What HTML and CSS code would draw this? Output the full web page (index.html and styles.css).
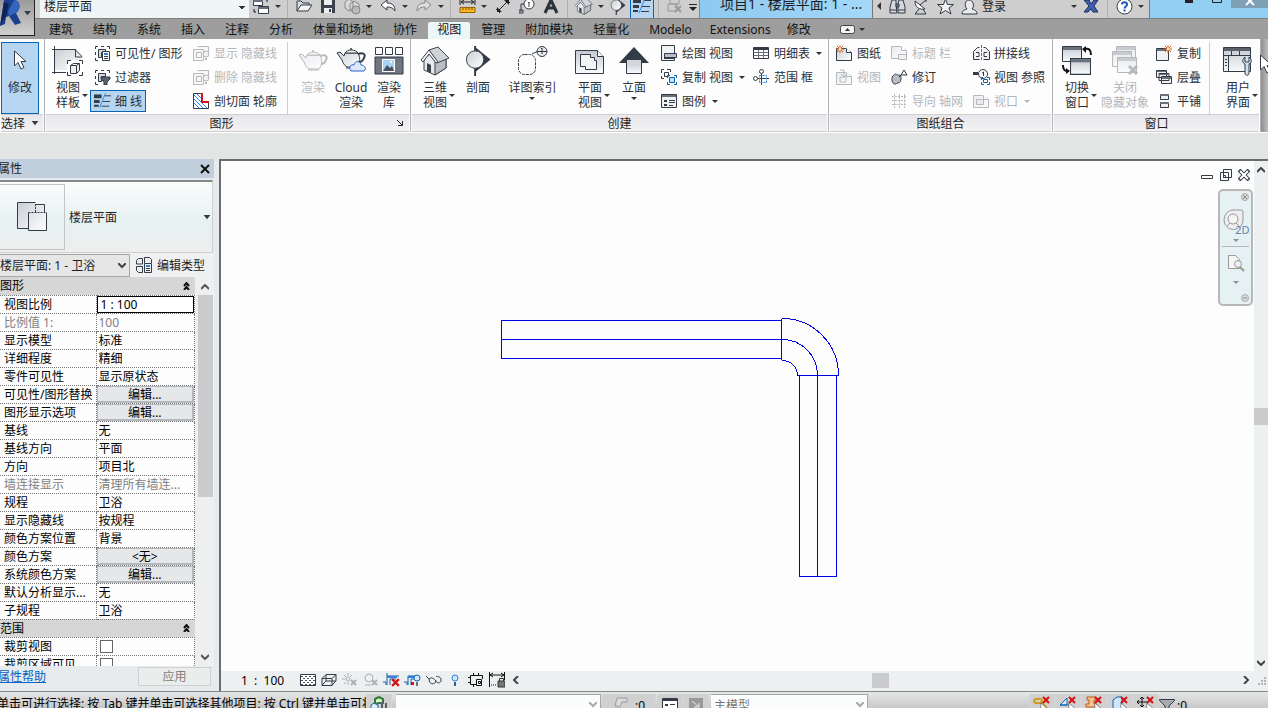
FILE: index.html
```html
<!DOCTYPE html>
<html lang="zh-CN">
<head>
<meta charset="utf-8">
<title>项目1 - 楼层平面: 1 - 卫浴</title>
<link rel="stylesheet" href="styles.css">
</head>
<body>
<svg class="defs" aria-hidden="true">
  <defs>
    <linearGradient id="gr" x1="0" y1="0" x2="1" y2="1"><stop offset="0" stop-color="#c9cdd3"/><stop offset="1" stop-color="#fff"/></linearGradient>
    <linearGradient id="gv" x1="0" y1="0" x2="0" y2="1"><stop offset="0" stop-color="#c3c8d0"/><stop offset="1" stop-color="#fafbfc"/></linearGradient>
  </defs>
  <symbol id="thin" viewBox="0 0 18 16"><path d="M0 1h8v4H0zM0 7h6v3H0zM0 12h5v2H0z" fill="#333b47"/><path d="M11 2.500h7M9 8.500h8M8 13.500h8" stroke="#333b47"/><path d="M12 0 6 15" stroke="#2f8be6"/></symbol>
  <symbol id="house" viewBox="0 0 30 30"><path d="M4 13v11l11 5 11-7V11L15 3z" fill="#e7e9ec" stroke="#3b424c"/><path d="M15 16v13l11-7V10z" fill="#b9bec6" stroke="#3b424c"/><path d="M9 4l9-3 11 11-12 5z" fill="#cfd3d8" stroke="#3b424c"/><path d="M9 4 1 14l2 2 6-8 7 9 2-1z" fill="#f3f4f5" stroke="#3b424c"/><path d="M7 17l4 2v8l-4-2z" fill="#3b424c"/></symbol>
  <symbol id="sect" viewBox="0 0 26 31"><path d="M10 1l16 13-16 13z" fill="#333b47"/><path d="M10 0v31" stroke="#333b47" stroke-width="2"/><circle cx="10" cy="14" r="9" fill="url(#gr)" stroke="#333b47"/></symbol>
  <symbol id="teapot" viewBox="0 0 30 24"><path d="M9 7h13c2 4 3 9-1 14H11C8 19 7 17 6 14L1 7l3-1 4 4z" fill="url(#gr)" stroke="#333b47"/><path d="M22 8c5-2 8 0 6 4-1 3-3 4-5 4" fill="none" stroke="#333b47" stroke-width="2"/><path d="M9 7c2-4 11-4 13 0z" fill="#eef0f2" stroke="#333b47"/><path d="M10 22h11" stroke="#333b47"/><circle cx="15" cy="3" r="1" fill="#333b47"/></symbol>
  <symbol id="frame" viewBox="0 0 16 16"><path d="M1.500 4V1.500H4M7 1.500h3M13 1.500h2.500V4M1.500 7v3M1.500 13v2.500H4" fill="none" stroke="#333b47"/><path d="M4.500 4.500h7v3h-4v5h-3z" fill="#d5d9de" stroke="#333b47"/></symbol>
  <symbol id="sheet" viewBox="0 0 16 16"><path d="M.5 3.500h9l6 4v8H.5z" fill="url(#gr)" stroke="#333b47"/><path d="M10.500 3.500v4h5" fill="#fff" stroke="#333b47"/></symbol>
  <symbol id="win" viewBox="0 0 20 16"><path d="M.5.5h19v15H.5z" fill="url(#gv)" stroke="#333b47"/><path d="M1 1h18v3H1z" fill="#69717d"/></symbol>
  <symbol id="spark" viewBox="0 0 8 8"><path d="M4 0v8M0 4h8M1 1l6 6M7 1 1 7" stroke="#d8541b"/><circle cx="4" cy="4" r="1.500" fill="#ffe6a0"/></symbol>
  <symbol id="redx" viewBox="0 0 8 8"><path d="M1 1l6 6M7 1 1 7" stroke="#d31212" stroke-width="2"/></symbol>
  <symbol id="arrow" viewBox="0 0 14 20"><path d="M1.500 1v15l3.500-3.500 3 6.500 3-1.500-3-6h5z" fill="#fff" stroke="#333b47"/></symbol>
  <symbol id="dwarr" viewBox="0 0 8 6"><path d="M0 0h8L4 5z" fill="#333b47"/></symbol>
</svg>

<header class="top">
  <button class="app" aria-label="应用程序菜单"><svg width="24" height="28" viewBox="0 0 24 28"><path d="M0 26 4 0h10c7 0 7 10 2 13l5 10-6 2-6-9-3 1-1 7z" fill="#1d3f8f"/><path d="M0 26 4 2l5 2-3 12z" fill="#0f2559"/><path d="M14 0c7 0 7 10 2 13L9 16l-1-4z" fill="#3564bd"/></svg><svg class="caret" width="7" height="5"><use href="#dwarr"/></svg></button>
  <div class="bar">
    <div class="bar-in">
      <div class="qat">
        <select class="doc" aria-label="当前视图"><option>楼层平面</option></select>
        <button class="slot" aria-label="切换窗口"><svg width="18" height="18" viewBox="0 0 18 18"><path d="M1.500 2.500h9v6h-9zM6.500 9.500h10v7h-10z" fill="#fff" stroke="#333b47"/><path d="M6 10h10v2H6zM1 3h10v2H1z" fill="#69717d"/><path d="M12 2h3v3M2 12v3h2" fill="none" stroke="#111"/></svg></button><button class="dd" aria-label="更多"></button><i class="sep"></i>
        <button class="slot" aria-label="打开"><svg width="17" height="16" viewBox="0 0 17 16"><path d="M1 13V3h4l2 2h6v3" fill="#d9dce0" stroke="#333b47"/><path d="M1 13 5 7h11l-4 6z" fill="#f4f5f6" stroke="#333b47"/></svg></button>
        <button class="slot" aria-label="保存"><svg width="16" height="16" viewBox="0 0 16 16"><path d="M1 1h14v14H1z" fill="#39414d"/><path d="M4 1h8v6H4zM4 10h8v5H4z" fill="#eceef0"/><path d="M9 11h2v3H9z" fill="#39414d"/></svg></button>
        <button class="slot" aria-label="同步"><svg width="18" height="18" viewBox="0 0 18 18"><path d="M2 5l4-3 4 3v6l-4 3-4-3zM7 7l4-3 5 3v6l-5 3-4-3z" fill="#d7d7d7" stroke="#888"/><circle cx="13" cy="13" r="4" fill="#bbb" stroke="#888"/></svg></button><button class="dd gap" aria-label="更多"></button>
        <button class="slot" aria-label="放弃"><svg width="16" height="16" viewBox="0 0 16 16"><path d="M1 7 7 2v3c6 0 8 3 8 8-2-3-4-4-8-4v3z" fill="#fff" stroke="#333b47"/></svg></button><button class="dd gap" aria-label="更多"></button>
        <button class="slot" aria-label="重做"><svg width="16" height="16" viewBox="0 0 16 16"><path d="M15 7 9 2v3C3 5 1 8 1 13c2-3 4-4 8-4v3z" fill="#ddd" stroke="#8a8a8a"/></svg></button><button class="dd" aria-label="更多"></button><i class="sep"></i>
        <button class="slot" aria-label="测量"><svg width="17" height="16" viewBox="0 0 17 16"><path d="M1 1v6M16 1v6M2 4h13M5 2 2 4l3 2M12 2l3 2-3 2" fill="none" stroke="#222"/><path d="M1 9.500h15v5H1z" fill="#f7b71d" stroke="#9a6400"/><path d="M4 10v2M7 10v2M10 10v2M13 10v2" stroke="#7a4c00"/></svg></button><button class="dd gap" aria-label="更多"></button>
        <button class="slot" aria-label="对齐尺寸标注"><svg width="16" height="16" viewBox="0 0 16 16"><path d="M3 13 13 3M1 11l4 4M11 1l4 4" stroke="#222"/><path d="M2 14v-5l5 5zM14 2v5L9 2z" fill="#222"/></svg></button>
        <button class="slot" aria-label="按类别标记"><svg width="17" height="16" viewBox="0 0 17 16"><circle cx="10" cy="6" r="5" fill="#fff" stroke="#333b47"/><path d="M9 5l1-1v5M5 6H2v8M0 12h4v3H0z" fill="none" stroke="#333b47"/></svg></button>
        <button class="slot" aria-label="文字"><svg width="16" height="16" viewBox="0 0 16 16"><path d="M2 15 8 2l6 13M5 10h6" fill="none" stroke="#2c323b" stroke-width="3"/></svg></button><i class="sep"></i>
        <button class="slot" aria-label="默认三维视图"><svg width="18" height="18"><use href="#house"/></svg></button><button class="dd" aria-label="更多"></button>
        <button class="slot" aria-label="剖面"><svg width="16" height="18"><use href="#sect"/></svg></button>
        <button class="slot pressed" aria-label="细线"><svg width="18" height="16"><use href="#thin"/></svg></button><i class="sep"></i>
        <button class="slot off" aria-label="关闭隐藏对象"><svg width="16" height="16" viewBox="0 0 16 16"><path d="M3 1h9v5H3zM1 6h9v7H1z" fill="none" stroke="#333b47"/><path d="M8 8l6 6M14 8l-6 6" stroke="#333b47" stroke-width="2"/></svg></button>
        <button class="slot narrow" aria-label="自定义快速访问工具栏"><svg width="8" height="12" viewBox="0 0 8 12"><path d="M0 4.500h8" stroke="#222"/><path d="M0 7h8l-4 4z" fill="#222"/></svg></button>
      </div>
      <div class="caption">项目1 - 楼层平面: 1 - ...</div>
      <div class="info">
        <button class="slot narrow" aria-label="折叠"><svg width="4" height="8"><path d="M4 0v8L0 4z" fill="#333"/></svg></button>
        <button class="slot" aria-label="搜索"><svg width="17" height="17" viewBox="0 0 17 17"><path d="M3 2h4v4l1 9H1V9zM10 2h4l2 7v6H9V6zM7 6h3v3H7z" fill="#d5d8dc" stroke="#333b47"/><path d="M1 12h7M9 12h7" stroke="#333b47"/></svg></button>
        <button class="slot" aria-label="通讯中心"><svg width="17" height="17" viewBox="0 0 17 17"><path d="M2 3c0 6 4 9 10 8z" fill="#fff" stroke="#333b47"/><path d="M7 7l6-5M13 1v3M6 11l-4 5h11l-3-5" fill="none" stroke="#333b47"/></svg></button>
        <button class="slot" aria-label="收藏夹"><svg width="17" height="17" viewBox="0 0 17 17"><path d="M8.500 1l2 5.500h6L12 10l2 6-5.500-3.500L3 16l2-6L.5 6.500h6z" fill="#f1f2f3" stroke="#333b47"/></svg></button>
        <button class="login"><svg width="17" height="17" viewBox="0 0 17 17"><path d="M1 16c0-4 3-4 5-5-3-3-2-9 2-9s6 6 3 9c2 1 5 1 5 5z" fill="#e9ebed" stroke="#333b47"/></svg>登录</button>
        <span class="grow"></span>
        <button class="dd" aria-label="更多"></button>
        <button class="slot" aria-label="Exchange Apps"><svg width="16" height="16" viewBox="0 0 16 16"><path d="M1 2h5l2 4 3-4h4l-4 6 4 6h-5l-2-3-3 3H1l5-6z" fill="#3f5fae" stroke="#1d2d5c"/></svg></button><i class="sep"></i>
        <button class="slot" aria-label="帮助"><svg width="17" height="17" viewBox="0 0 17 17"><circle cx="8.500" cy="8.500" r="7.500" fill="#fff" stroke="#333b47"/><path d="M6 6.500c0-3 5-3 5 0 0 2-2.500 2-2.500 4M8.500 11.500v2" fill="none" stroke="#2354b8" stroke-width="2"/></svg></button><button class="dd" aria-label="更多"></button>
      </div>
      <div class="winbtns">
        <button aria-label="最小化"><svg width="10" height="16"><path d="M1 6h8v3H1z" fill="#222"/></svg></button>
        <button aria-label="最大化"><svg width="10" height="16"><path d="M.5.5h9v8h-9z" fill="none" stroke="#222"/></svg></button>
        <button class="close" aria-label="关闭"><svg width="10" height="16"><path d="M1 0l8 8M9 0 1 8" stroke="#fff" stroke-width="2"/></svg></button>
      </div>
    </div>
  </div>
  <nav class="tabs">
    <button>建筑</button><button>结构</button><button>系统</button><button>插入</button><button>注释</button><button>分析</button><button>体量和场地</button><button>协作</button><button class="on">视图</button><button>管理</button><button>附加模块</button><button>轻量化</button><button>Modelo</button><button class="ext">Extensions</button><button class="ext">修改</button>
    <button class="mini" aria-label="最小化功能区"><svg width="15" height="9" viewBox="0 0 15 9"><rect x=".5" y=".5" width="14" height="8" rx="2" fill="#f4f4f4" stroke="#444"/><path d="M5 6l2.500-3L10 6z" fill="#333"/></svg></button><button class="dd" aria-label="更多"></button>
  </nav>
</header>

<section class="ribbon" aria-label="视图">
  <div class="panel">
    <div class="tools t-select">
      <button class="big pressed"><svg width="14" height="30" viewBox="0 0 14 30"><use href="#arrow" y="4" width="14" height="20"/></svg><span>修改</span></button>
    </div>
    <div class="ptitle left">选择 <svg width="8" height="5"><use href="#dwarr"/></svg></div>
  </div>

  <div class="panel">
    <div class="tools t-graph">
      <button class="big"><svg width="32" height="30" viewBox="0 0 32 30"><path d="M2 3h21l7 7v14H2z" fill="url(#gr)"/><path d="M2.500 0v28M0 3.500h23l7 7M0 26.500h14M23.500 3v8H30" fill="none" stroke="#333b47"/><path d="M15 14h15v15H15z" fill="#fff"/><path d="M15.500 18v-3.500H19M27 14.500h3.500V18M15.500 26v3.500H19M27 29.500h3.500V26" fill="none" stroke="#333b47"/><path d="M18.500 19.500l3-2h6v7l-3 3h-6zM18.500 19.500h6v8M24.500 19.500l3-2" fill="#eee" stroke="#333b47"/></svg><span class="split">视图<br>样板</span></button>
      <div class="stack">
        <button class="sm"><svg width="17" height="16" viewBox="0 0 17 16"><use href="#frame" width="16" height="16"/><path d="M8.500 6.500h7v9h-7z" fill="#fff" stroke="#333b47"/><path d="M10 8h4v2h-4z" fill="#2f7fdc"/><path d="M10 11.500h4M10 13.500h4" stroke="#333b47"/></svg>可见性/ 图形</button>
        <button class="sm"><svg width="17" height="16" viewBox="0 0 17 16"><use href="#frame" width="16" height="16"/><path d="M7 8h9v2l-3 3v3h-3v-3L7 10z" fill="#59616d" stroke="#333b47"/></svg>过滤器</button>
        <button class="sm pressed"><svg width="17" height="16"><use href="#thin"/></svg>细 线</button>
      </div>
      <div class="stack ruled">
        <button class="sm off" disabled><svg width="17" height="16" viewBox="0 0 17 16"><path d="M4.500 1.500h11v8M.5 4.500h10v11H.5zM3.500 7.500h5v5h-5z" fill="#eee" stroke="#333b47"/><circle cx="13" cy="9" r="3" fill="#ddd" stroke="#333b47"/><path d="M12 13h2v2h-2z" fill="#333b47"/></svg>显示 隐藏线</button>
        <button class="sm off" disabled><svg width="17" height="16" viewBox="0 0 17 16"><path d="M4.500 1.500h11v8M.5 4.500h10v11H.5zM3.500 7.500h5v5h-5z" fill="#eee" stroke="#333b47"/><circle cx="13" cy="9" r="3" fill="#ddd" stroke="#333b47"/><path d="M12 13h2v2h-2z" fill="#333b47"/></svg>删除 隐藏线</button>
        <button class="sm"><svg width="17" height="16" viewBox="0 0 17 16"><path d="M.5.5h15v15H.5z" fill="#fff" stroke="#333b47"/><path d="M1 2l13 13M1 6l9 9M1 10l5 5M4 1l6 6" stroke="#2f7fdc"/><path d="M9 0h7v9H9z" fill="#fff"/><path d="M9 0v9h7" fill="none" stroke="#d31212" stroke-width="2"/></svg>剖切面 轮廓</button>
      </div>
      <button class="big off" disabled><svg width="30" height="30" viewBox="0 0 30 30"><use href="#teapot" y="2" width="30" height="24"/></svg><span>渲染</span></button>
      <button class="big"><svg width="32" height="30" viewBox="0 0 32 30"><use href="#teapot" x="1" width="30" height="24"/><path d="M16 25c-3-4 0-7 3-6 1-5 7-4 7 0 4 0 6 4 3 6z" fill="#dbe9fb" stroke="#2a62c9"/></svg><span>Cloud<br>渲染</span></button>
      <button class="big"><svg width="30" height="30" viewBox="0 0 30 30"><path d="M1.500 1.500h7v7h-7zM11.500 1.500h7v7h-7zM21.500 1.500h7v7h-7z" fill="#fff" stroke="#333b47"/><path d="M1 11h28v17H1z" fill="#6e7682" stroke="#333b47"/><path d="M8.500 13.500h12v12h-12z" fill="#a9d2f5" stroke="#fff"/><path d="M9 25l4-6 3 3 2-2 2 5z" fill="#47515e"/><circle cx="17" cy="16" r="1" fill="#fff"/></svg><span>渲染<br>库</span></button>
    </div>
    <div class="ptitle with-launch"><span>图形</span><button class="launch" aria-label="图形显示选项"><svg width="6" height="6"><path d="M0 0l5 5M5.500 1v4.500H1" fill="none" stroke="#222"/></svg></button></div>
  </div>

  <div class="panel">
    <div class="tools t-create">
      <button class="big"><svg width="30" height="30"><use href="#house"/></svg><span class="split">三维<br>视图</span></button>
      <button class="big"><svg width="26" height="30"><use href="#sect"/></svg><span>剖面</span></button>
      <button class="big"><svg width="40" height="30" viewBox="0 0 40 30"><rect x="5.500" y="8.500" width="17" height="20" rx="6" fill="none" stroke="#333b47" stroke-dasharray="3 1"/><path d="M19 8l4-2h5" fill="none" stroke="#333b47"/><circle cx="29" cy="5.500" r="5" fill="#e6e8ea" stroke="#333b47"/><path d="M24 5.500h10M28 3l1-1v6" fill="none" stroke="#333b47"/></svg><span class="drop">详图索引</span></button>
      <button class="big"><svg width="32" height="30" viewBox="0 0 32 30"><path d="M1.500 4.500h22l6 6v17h-28z" fill="url(#gv)" stroke="#333b47"/><path d="M23.500 4.500v6h6" fill="#fff" stroke="#333b47"/><path d="M6.500 8.500h10v3h4v3h2v9h-11v-3h-5z" fill="#f2f3f4" stroke="#333b47"/></svg><span class="split">平面<br>视图</span></button>
      <button class="big"><svg width="30" height="30" viewBox="0 0 30 30"><path d="M7.500 15h15v12.500h-15z" fill="url(#gv)" stroke="#333b47"/><path d="M0 17 15 1l15 16z" fill="#333b47"/><path d="M8 14h14v6H8z" fill="#d2d6db"/></svg><span class="drop">立面</span></button>
      <div class="stack wide">
        <button class="sm"><svg width="17" height="16" viewBox="0 0 17 16"><path d="M.5.5h13v15H.5z" fill="#f1f2f3" stroke="#333b47"/><path d="M3.500 8.500h12v4h-12z" fill="#b9bec6" stroke="#333b47"/><path d="M3 12h11v2H3z" fill="#333b47"/></svg>绘图 视图</button>
        <button class="sm"><svg width="17" height="16" viewBox="0 0 17 16"><path d="M.5 4V.5H3M6 .5h3.500V3M.5 7v2.500H3M3.500 3.500h4v4h-4z" fill="none" stroke="#333b47"/><path d="M6.500 9V6.500H9M13 6.500h2.500V9M6.500 13v2.500H9M13 15.500h2.500V13" fill="none" stroke="#0a64b4"/><path d="M8.500 8.500h5v5h-5z" fill="#bcdcf7" stroke="#0a64b4"/></svg>复制 视图<i class="c"></i></button>
        <button class="sm"><svg width="17" height="16" viewBox="0 0 17 16"><path d="M.5 1.500h15v13H.5z" fill="#f1f2f3" stroke="#333b47"/><path d="M1 2h14v2H1z" fill="#69717d"/><path d="M3 7h3v2H3zM3 11h3v2H3z" fill="#333b47"/><path d="M8 7.500h6M8 9.500h6M8 12.500h4" stroke="#333b47"/></svg>图例<i class="c"></i></button>
      </div>
      <div class="stack">
        <button class="sm"><svg width="17" height="16" viewBox="0 0 17 16"><path d="M.5 2.500h15v11H.5z" fill="#fff" stroke="#333b47"/><path d="M1 3h14v2H1z" fill="#333b47"/><path d="M1 7.500h14M1 10.500h14M5.500 5v8M10.500 5v8" stroke="#69717d"/></svg>明细表<i class="c"></i></button>
        <button class="sm"><svg width="17" height="16" viewBox="0 0 17 16"><circle cx="8.500" cy="2.500" r="2" fill="none" stroke="#333b47"/><circle cx="2.500" cy="9.500" r="2" fill="none" stroke="#333b47"/><path d="M8.500 5v11M5 9.500h11" stroke="#333b47"/><path d="M6.500 6.500h7v7h-7z" fill="none" stroke="#2f7fdc" stroke-dasharray="2 1"/></svg>范围 框</button>
      </div>
    </div>
    <div class="ptitle">创建</div>
  </div>

  <div class="panel">
    <div class="tools t-sheet">
      <div class="stack">
        <button class="sm"><svg width="17" height="16" viewBox="0 0 17 16"><use href="#sheet" width="16" height="16"/><use href="#spark" width="8" height="8"/></svg>图纸</button>
        <button class="sm off" disabled><svg width="17" height="16" viewBox="0 0 17 16"><use href="#sheet" width="16" height="16"/><path d="M4 8h6v5H4zM4 1h4v6M5 5l3 3 3-3" fill="none" stroke="#333b47"/></svg>视图</button>
      </div>
      <div class="stack">
        <button class="sm off" disabled><svg width="17" height="16" viewBox="0 0 17 16"><use href="#sheet" width="16" height="16" y="-2"/><path d="M7.500 9.500h8v5h-8z" fill="#ddd" stroke="#333b47"/></svg>标题 栏</button>
        <button class="sm"><svg width="17" height="16" viewBox="0 0 17 16"><path d="M3 6c2-2 3 0 4 0s3 0 3 3-1 5-3 5-1 1-3 1-3-2-3-4 0-4 2-5z" fill="#b9bec6" stroke="#333b47"/><path d="M10 6l3-5 3 5zM8 8l3-3" fill="#fff" stroke="#333b47"/></svg>修订</button>
        <button class="sm off" disabled><svg width="17" height="16" viewBox="0 0 17 16"><path d="M1 3.500h15M1 7.500h15M1 11.500h15M3.500 1v14M8.500 1v14M13.500 1v14" stroke="#333b47" stroke-dasharray="2 1"/></svg>导向 轴网</button>
      </div>
      <div class="stack">
        <button class="sm"><svg width="17" height="16" viewBox="0 0 17 16"><path d="M6.500 2.500h-2L.5 6.500v8h6M10.500 2.500h2l4 4v8h-6M3 7.500h3v4H3M14 7.500h-3v4h3" fill="#eee" stroke="#333b47"/><path d="M8.500 0v16" stroke="#2f7fdc" stroke-dasharray="3 1"/></svg>拼接线</button>
        <button class="sm"><svg width="17" height="16" viewBox="0 0 17 16"><path d="M0 3h5v3H0z" fill="#333b47"/><circle cx="10" cy="5" r="4.500" fill="#fff" stroke="#333b47"/><path d="M9 4l1.500-1v4" fill="none" stroke="#333b47"/><path d="M8.500 11V8.500H10M14 8.500h2.500V11M8.500 13v2.500H11M14 15.500h2.500V13M10.500 10.500h4v3h-4z" fill="none" stroke="#0a64b4"/></svg>视图 参照</button>
        <button class="sm off" disabled><svg width="17" height="16" viewBox="0 0 17 16"><use href="#sheet" width="16" height="16" y="-1"/><path d="M3.500 6.500h7v5h-7z" fill="#ccc" stroke="#333b47"/></svg>视口<i class="c"></i></button>
      </div>
    </div>
    <div class="ptitle">图纸组合</div>
  </div>

  <div class="panel">
    <div class="tools t-win">
      <button class="big"><svg width="32" height="30" viewBox="0 0 32 30"><use href="#win" x="1" y="0" width="20" height="16"/><use href="#win" x="9" y="12" width="21" height="17"/><path d="M24 3c4-1 6 1 6 6M2 19c0 4 1 6 4 6" fill="none" stroke="#111" stroke-width="2"/><path d="M25 0v7l-4-4zM5 22v6l4-3z" fill="#111"/></svg><span class="split">切换<br>窗口</span></button>
      <button class="big off" disabled><svg width="32" height="30" viewBox="0 0 32 30"><use href="#win" x="7" y="0" width="20" height="16"/><use href="#win" x="3" y="5" width="20" height="16"/><use href="#win" x="8" y="11" width="20" height="16"/><path d="M20 20l8 8M28 20l-8 8" stroke="#333b47" stroke-width="3"/></svg><span>关闭<br>隐藏对象</span></button>
      <div class="stack ruled">
        <button class="sm"><svg width="17" height="16" viewBox="0 0 17 16"><path d="M.5 3.500h12v12H.5z" fill="#eef0f2" stroke="#333b47"/><path d="M1 4h11v2H1z" fill="#69717d"/><use href="#spark" x="8" width="8" height="8"/></svg>复制</button>
        <button class="sm"><svg width="17" height="16" viewBox="0 0 17 16"><path d="M.5 1.500h10v7H.5zM3 4.500h10v7H3zM5.500 7.500h10v7h-10z" fill="#eef0f2" stroke="#333b47"/><path d="M1 2h9v1H1zM3 5h9v1H3zM6 8h9v2H6z" fill="#69717d"/></svg>层叠</button>
        <button class="sm"><svg width="17" height="16" viewBox="0 0 17 16"><path d="M4.500 1.500h8v5h-8zM4.500 9.500h8v5h-8z" fill="#eef0f2" stroke="#333b47"/><path d="M4 1h9v2H4zM4 9h9v2H4z" fill="#69717d"/></svg>平铺</button>
      </div>
      <button class="big"><svg width="32" height="30" viewBox="0 0 32 30"><path d="M1.500 1.500h27v24h-27z" fill="url(#gv)" stroke="#333b47"/><path d="M2 2h26v3H2z" fill="#59616d"/><path d="M2 9.500h26M6.500 9v16M9.500 5v4M17.500 5v4M3 13.500h2M3 16.500h2M3 19.500h2" stroke="#333b47"/><path d="M23 11v5h4v-5c3 2 3 6 0 7v9c0 3-4 3-4 0v-9c-3-1-3-5 0-7z" fill="#cfe0f2" stroke="#333b47"/></svg><span class="split">用户<br>界面</span></button>
    </div>
    <div class="ptitle">窗口</div>
  </div>
  <div class="more"></div>
</section>
<svg class="pointer" width="14" height="20"><use href="#arrow"/></svg>

<div class="options"></div>

<main class="work">
  <aside class="palette">
    <div class="phead"><span>属性</span><button aria-label="关闭"><svg width="10" height="10"><path d="M1 1l8 8M9 1 1 9" stroke="#111" stroke-width="2"/></svg></button></div>
    <button class="type">
      <span class="thumb"><svg width="32" height="32" viewBox="0 0 32 32"><path d="M1.500 1.500h18v3h9v7h2v18h-18v-2h-11z" fill="url(#gr)"/><path d="M19.500 1.500h-18v26h11M20 3.500h8.500v8" fill="none" stroke="#333b47"/><path d="M12.500 11.500v18h18v-18" fill="none" stroke="#333b47"/><path d="M12.500 11.500h18M19.500 3v8" fill="none" stroke="#333b47" stroke-dasharray="2 1"/></svg></span>
      <span class="grow">楼层平面</span><svg width="8" height="5"><use href="#dwarr"/></svg>
    </button>
    <div class="filter">
      <span class="combo"><select aria-label="属性过滤器"><option>楼层平面: 1 - 卫浴</option></select><svg width="8" height="6"><path d="M0 0l4 4 4-4" fill="none" stroke="#444" stroke-width="2"/></svg></span>
      <button class="edit"><svg width="17" height="17" viewBox="0 0 17 17"><path d="M.5 7V3.500l2-2h4V7zM8.500 6V.5h5l2 2V6M.5 9.500h6v6h-4l-2-2zM8.500 6.500h7v9h-7z" fill="#eef0f2" stroke="#333b47"/><path d="M10 8h4v2h-4z" fill="#2f7fdc"/><path d="M10 11.500h4M10 13.500h4" stroke="#333b47"/></svg>编辑类型</button>
    </div>
    <div class="pbody">
      <div class="rows">
      <table>
        <colgroup><col class="name"><col></colgroup>
        <tr class="group"><th colspan="2"><div>图形<svg width="7" height="8"><path d="M1 4l2.500-3L6 4M1 8l2.500-3L6 8" fill="none" stroke="#111" stroke-width="2"/></svg></div></th></tr>
        <tr><th><label for="scale">视图比例</label></th><td class="field"><input id="scale" value="1 : 100"></td></tr>
        <tr class="dim"><th>比例值 1:</th><td>100</td></tr>
        <tr><th>显示模型</th><td>标准</td></tr>
        <tr><th>详细程度</th><td>精细</td></tr>
        <tr><th>零件可见性</th><td>显示原状态</td></tr>
        <tr><th>可见性/图形替换</th><td class="field"><button>编辑...</button></td></tr>
        <tr><th>图形显示选项</th><td class="field"><button>编辑...</button></td></tr>
        <tr><th>基线</th><td>无</td></tr>
        <tr><th>基线方向</th><td>平面</td></tr>
        <tr><th>方向</th><td>项目北</td></tr>
        <tr class="dim"><th>墙连接显示</th><td>清理所有墙连...</td></tr>
        <tr><th>规程</th><td>卫浴</td></tr>
        <tr><th>显示隐藏线</th><td>按规程</td></tr>
        <tr><th>颜色方案位置</th><td>背景</td></tr>
        <tr><th>颜色方案</th><td class="field"><button>&lt;无&gt;</button></td></tr>
        <tr><th>系统颜色方案</th><td class="field"><button>编辑...</button></td></tr>
        <tr><th>默认分析显示...</th><td>无</td></tr>
        <tr><th>子规程</th><td>卫浴</td></tr>
        <tr class="group"><th colspan="2"><div>范围<svg width="7" height="8"><path d="M1 4l2.500-3L6 4M1 8l2.500-3L6 8" fill="none" stroke="#111" stroke-width="2"/></svg></div></th></tr>
        <tr><th><label for="crop">裁剪视图</label></th><td><input type="checkbox" id="crop"></td></tr>
        <tr><th><label for="cropv">裁剪区域可见</label></th><td><input type="checkbox" id="cropv"></td></tr>
      </table>
      </div>
      <div class="vscroll"><svg width="8" height="6"><path d="M0 5l4-4 4 4" fill="none" stroke="#555" stroke-width="2"/></svg><i></i><span class="grow"></span><svg width="8" height="6"><path d="M0 1l4 4 4-4" fill="none" stroke="#555" stroke-width="2"/></svg></div>
    </div>
    <div class="pfoot"><a href="#help">属性帮助</a><button disabled>应用</button></div>
  </aside>

  <section class="view">
    <div class="canvas">
      <svg class="drawing" width="100%" height="100%" role="img" aria-label="管道平面图">
        <g fill="none" stroke="#0000e8" shape-rendering="crispEdges" transform="translate(-221 -161)">
          <path d="M501.500 320.500H781M501.500 339.500H781M501.500 358.500H781M501.500 320v39M781.500 319v41M797 375.500h42M799.500 375v202M817.500 375v202M836.500 375v202M799 576.500h38"/>
          <path d="M782 318.500a56 57 0 0 1 56.500 57M782 339.500a35 36 0 0 1 35.500 36M782 360.500a15 15 0 0 1 15.500 15"/>
        </g>
      </svg>
      <div class="mdi">
        <button aria-label="最小化"><svg width="13" height="12"><path d="M.5 6.500h11v3H.5z" fill="#fff" stroke="#333b47"/></svg></button>
        <button aria-label="还原"><svg width="12" height="12"><path d="M3.500.5h8v8h-8zM.5 3.500h8v8h-8zM3.500 6.500h2v2h-2z" fill="#fff" stroke="#333b47"/></svg></button>
        <button aria-label="关闭"><svg width="12" height="12"><path d="M1 1l10 10M11 1 1 11" stroke="#333b47" stroke-width="4"/><path d="M2 2l8 8M10 2l-8 8" stroke="#fff" stroke-width="2"/></svg></button>
      </div>
      <div class="navbar">
        <svg class="end" width="8" height="8"><circle cx="4" cy="4" r="3.500" fill="#ddd" stroke="#aaa"/><path d="M2 2l4 4M6 2 2 6" stroke="#888"/></svg>
        <button class="wheel" aria-label="二维控制盘"><svg width="26" height="28" viewBox="0 0 26 28"><path d="M1 12a9 10 0 0 1 9-10h8q2 0 2 2v8a9 9 0 0 1-19 0z" fill="#eee" stroke="#999"/><circle cx="10" cy="11" r="5" fill="#f4f4f4" stroke="#999"/><path d="M4 18l3-3M13 15l3 3" stroke="#999"/></svg><b>2D</b></button>
        <i class="c"></i><hr>
        <button aria-label="区域放大"><svg width="18" height="18" viewBox="0 0 18 18"><path d="M1.500 1.500h7l4 4v9h-11z" fill="#f4f4f4" stroke="#999"/><circle cx="11" cy="10" r="3.500" fill="#eef" stroke="#999"/><path d="M13 13l4 4" stroke="#998" stroke-width="2"/></svg></button>
        <i class="c far"></i>
        <svg class="end last" width="8" height="8"><circle cx="4" cy="4" r="3.500" fill="#ddd" stroke="#aaa"/><path d="M2 4h4" stroke="#888"/></svg>
      </div>
    </div>
    <div class="vs"><svg width="8" height="6"><path d="M0 5l4-4 4 4" fill="none" stroke="#444" stroke-width="2"/></svg><span class="grow"></span><i></i><span class="grow"></span><svg width="8" height="6"><path d="M0 1l4 4 4-4" fill="none" stroke="#444" stroke-width="2"/></svg></div>
    <div class="vcb">
      <button class="scale">1 &nbsp;: &nbsp;100</button>
      <button aria-label="详细程度"><svg width="16" height="14" viewBox="0 0 16 14"><path d="M.5 1.500h15v11H.5z" fill="#fff" stroke="#333b47"/><path d="M1 3.500h14M1 7.500h14M1 11.500h14" stroke="#4a525e" stroke-dasharray="2 2"/><path d="M3 5.500h12M3 9.500h12" stroke="#4a525e" stroke-dasharray="2 2"/></svg></button>
      <button aria-label="视觉样式"><svg width="16" height="14" viewBox="0 0 16 14"><path d="M1 5.500 5 1.500h10v6l-4 5H1zM1 5.500h10v7M11 5.500l4-4M5 2v6h10M5 8l-4 4" fill="none" stroke="#333b47"/></svg></button>
      <button class="off" aria-label="日光路径"><svg width="16" height="14" viewBox="0 0 16 14"><path d="M6 0v3M6 9v3M0 6h3M2 2l2 2M10 2 8 4M2 11l2-2" stroke="#333b47"/><circle cx="6" cy="6" r="2" fill="none" stroke="#333b47"/><path d="M9 7l5 5M14 7l-5 5" stroke="#333b47" stroke-width="2"/></svg></button>
      <button class="off" aria-label="阴影"><svg width="16" height="14" viewBox="0 0 16 14"><circle cx="6" cy="5" r="4" fill="none" stroke="#333b47"/><path d="M2 12h6" stroke="#333b47"/><path d="M9 7l5 5M14 7l-5 5" stroke="#333b47" stroke-width="2"/></svg></button>
      <button aria-label="裁剪视图"><svg width="17" height="14" viewBox="0 0 17 14"><path d="M0 9h3v3M4 12V3h12M4 3V0M7 12V6h6" fill="none" stroke="#1f5f9c"/><path d="M4 3h10v2H4z" fill="#2f7fdc"/><use href="#redx" x="8" y="5" width="9" height="9"/></svg></button>
      <button aria-label="显示裁剪区域"><svg width="17" height="14" viewBox="0 0 17 14"><path d="M0 9h3v3M4 12V3h8M7 12V6h3" fill="none" stroke="#1f5f9c"/><path d="M4 3h6v2H4z" fill="#2f7fdc"/><path d="M7 9h3v3H7z" fill="#d31212"/><circle cx="13" cy="5" r="3" fill="#d5eaff" stroke="#0a64b4"/><path d="M12 9h2v4h-2z" fill="#69717d"/></svg></button>
      <button aria-label="临时隐藏/隔离"><svg width="16" height="14" viewBox="0 0 16 14"><path d="M0 3l3 3c0 6 6 6 7 2 2 4 6 1 5-2-1-3-4-2-5-3M3 6c2-2 5-1 7 2" fill="none" stroke="#333b47"/></svg></button>
      <button aria-label="显示隐藏的图元"><svg width="12" height="14" viewBox="0 0 12 14"><circle cx="6" cy="5" r="3" fill="#cfe8ff" stroke="#2f7fdc"/><path d="M5 9h2v4H5z" fill="#2f5f9c"/></svg></button>
      <button aria-label="临时视图属性"><svg width="16" height="14" viewBox="0 0 16 14"><path d="M2.500 2.500h12V6M2.500 2.500v9H8M0 4.500h2M0 9.500h2M5.500 0v2M10.500 0v2M5.500 12v2" fill="none" stroke="#111"/><path d="M8.500 6.500h5v6h-5zM10.500 8.500h2v2h-2z" fill="#fff" stroke="#111"/></svg></button>
      <button aria-label="显示约束"><svg width="16" height="16" viewBox="0 0 16 16"><path d="M.5 0v15M15.500 0v8M1 3h14M4 1 1 3l3 2M12 1l3 2-3 2" fill="none" stroke="#111"/><path d="M10.500 9V6.500h4V9" fill="none" stroke="#333"/><path d="M9 9h7v6H9z" fill="#777" stroke="#333"/><path d="M2 13h5" stroke="#111" stroke-dasharray="1 1"/></svg></button>
      <svg class="scr" width="6" height="8"><path d="M5 0 1 4l4 4" fill="none" stroke="#444" stroke-width="2"/></svg>
      <span class="hs"><i></i></span>
      <svg class="scr" width="6" height="8"><path d="M1 0l4 4-4 4" fill="none" stroke="#444" stroke-width="2"/></svg>
    </div>
    <div class="grip"><svg width="10" height="10"><path d="M6 1h2v2H6zM3 4h2v2H3zM6 4h2v2H6zM0 7h2v2H0zM3 7h2v2H3zM6 7h2v2H6z" fill="#b5b5b5"/></svg></div>
  </section>
</main>

<footer class="status">
  <div class="status-in">
    <span class="hint">单击可进行选择; 按 Tab 键并单击可选择其他项目; 按 Ctrl 键并单击可将</span>
    <button class="cell" aria-label="工作集"><svg width="18" height="18" viewBox="0 0 18 18"><path d="M5 3l4-2 4 2v4H9L5 8z" fill="#d9f0d2" stroke="#2c7a2c" stroke-width="2"/><path d="M1 9l3-2 4 2v7H1z" fill="#dcebfa" stroke="#1c5c9e"/><path d="M12 7v9M10 7h4M16 7v9" stroke="#59616d" stroke-width="2"/></svg></button>
    <span class="combo wset"><select aria-label="活动工作集"><option></option></select><svg width="8" height="6"><path d="M0 0l4 4 4-4" fill="none" stroke="#aaa" stroke-width="2"/></svg></span>
    <button class="cell wide" aria-label="编辑请求"><svg class="off" width="16" height="16" viewBox="0 0 16 16"><path d="M4 1h10v4H9l-4 9V9H2z" fill="#eee" stroke="#333b47"/></svg>:0</button>
    <button class="cell" aria-label="设计选项"><svg width="18" height="16" viewBox="0 0 18 16"><path d="M1.500 1.500h15v13h-15z" fill="#fff" stroke="#333b47"/><path d="M1 2h15v2H1z" fill="#333b47"/><path d="M4 7h3v2H4zM4 11h3v2H4z" fill="#333b47"/><path d="M9 7.500h5M9 11.500h5" stroke="#333b47"/></svg></button>
    <button class="cell" aria-label="主选项"><svg width="16" height="16" viewBox="0 0 16 16"><path d="M1 1h14v14H1z" fill="#999"/><path d="M4 4l7 6v-4M11 10H6" stroke="#eee" fill="none"/></svg></button>
    <span class="combo option"><select aria-label="设计选项列表"><option>主模型</option></select><svg width="8" height="6"><path d="M0 0l4 4 4-4" fill="none" stroke="#aaa" stroke-width="2"/></svg></span>
    <span class="grow"></span>
    <button class="cell" aria-label="选择链接"><svg width="18" height="18" viewBox="0 0 18 18"><path d="M1 5c0-3 8-3 8 0s-8 3-8 0zM8 6l6 6" fill="none" stroke="#d49a1a" stroke-width="2"/><use href="#redx" x="9" width="8" height="8"/><use href="#arrow" x="7" y="6" width="8" height="12"/></svg></button>
    <button class="cell" aria-label="选择基线图元"><svg width="18" height="18" viewBox="0 0 18 18"><path d="M1 9 8 2v7zM1 9h10" fill="#dcebfa" stroke="#0a64b4"/><use href="#redx" x="9" width="8" height="8"/><use href="#arrow" x="9" y="6" width="8" height="12"/></svg></button>
    <button class="cell" aria-label="选择锁定图元"><svg width="18" height="18" viewBox="0 0 18 18"><path d="M2 1h9v3H9v4h3v3H1V8h3V4H2z" fill="#f9c489" stroke="#c2571a"/><use href="#redx" x="9" width="8" height="8"/><use href="#arrow" x="9" y="6" width="8" height="12"/></svg></button>
    <button class="cell" aria-label="按面选择图元"><svg width="18" height="18" viewBox="0 0 18 18"><path d="M2 4l4-3h5v14H2z" fill="#cfe6fa" stroke="#0a64b4"/><use href="#redx" x="9" width="8" height="8"/><use href="#arrow" x="9" y="6" width="8" height="12"/></svg></button>
    <button class="cell" aria-label="选择时拖曳图元"><svg width="18" height="18" viewBox="0 0 18 18"><path d="M5 1v10M0 6h10M3 3l2-2 2 2M3 9l2 2 2-2M2 4 0 6l2 2" fill="none" stroke="#111"/><use href="#redx" x="9" width="8" height="8"/><use href="#arrow" x="9" y="6" width="8" height="12"/></svg></button>
    <button class="cell last" aria-label="过滤器"><svg width="16" height="16" viewBox="0 0 16 16"><path d="M.5 2.500h15v1L10 9v6H6V9L.5 3.500z" fill="#a6abb3" stroke="#333b47"/></svg>:0</button>
  </div>
</footer>
</body>
</html>
```

FILE: styles.css
```css
* { box-sizing: border-box; }
body {
  margin: 0;
  height: 100vh;
  display: flex;
  flex-direction: column;
  overflow: hidden;
  background: #e3e4e4;
  color: #1e1e1e;
  font: 12px/15px "Noto Sans", "Noto Sans CJK SC", sans-serif;
}
button, select, input {
  font: inherit;
  color: inherit;
  margin: 0;
  padding: 0;
  border: 0;
  background: none;
  border-radius: 0;
}
select { appearance: none; }
svg { display: block; flex: none; }
.defs { position: absolute; width: 0; height: 0; }
.grow { flex: 1; }
.off { opacity: 0.35; }
.pressed { background: #b5d5f1; outline: 1px solid #0a64b4; outline-offset: -1px; }

/* title bar and tabs */
.top {
  display: grid;
  grid-template: 19px 20px / 35px 1fr;
  background: #9e9e9e;
}
.app {
  grid-row: 1 / 3;
  display: flex;
  align-items: center;
  height: 36px;
  padding-bottom: 8px;
  background: linear-gradient(#9a9a9a, #d0d0d0);
  border: solid #222;
  border-width: 0 1px 1px 0;
}
.bar { overflow: hidden; border-bottom: 1px solid #7e7e7e; background: #cecece; padding-left: 5px; }
.bar-in { display: flex; height: 26px; margin-top: -7px; }
.qat { display: flex; align-items: center; }
.doc {
  width: 209px;
  height: 26px;
  padding: 0 4px;
  background:
    linear-gradient(#333, #333) right 6px top 13px / 2px 3px no-repeat,
    linear-gradient(#333, #333) right 5px top 13px / 4px 2px no-repeat,
    linear-gradient(#333, #333) right 4px top 13px / 6px 1px no-repeat,
    #f0f6f7;
}
.slot { width: 24px; height: 26px; display: flex; align-items: center; justify-content: center; }
.slot.narrow { width: 12px; }
.sep { width: 1px; height: 26px; margin: 0 4px; background: #b0b0b0; }
.dd { width: 10px; height: 20px; display: flex; align-items: center; justify-content: center; }
.dd.gap { margin-right: 2px; }
.dd::before, .c::before, .split::after, .drop::after {
  content: "";
  width: 0;
  height: 0;
  border: solid transparent;
  border-width: 3px 3px 0;
  border-top-color: #333;
}
.caption {
  width: 173px;
  padding-left: 20px;
  background: linear-gradient(90deg, #8ec9f0, #a3d8f8);
  font-size: 14px;
  line-height: 22px;
  white-space: nowrap;
  border-left: 1px solid #888;
}
.info { display: flex; flex: 1; align-items: center; padding-right: 3px; border: solid #777; border-width: 0 1px; }
.login { display: flex; align-items: center; gap: 4px; margin-left: 4px; }
.winbtns { width: 118px; display: flex; background: #93cef3; }
.winbtns button { width: 28px; display: flex; justify-content: center; padding-top: 1px; }
.winbtns button:first-child { margin-left: 25px; }
.winbtns .close { height: 15px; padding-top: 4px; flex: 1; background: #7f9fb4; }
.tabs { display: flex; padding-left: 4px; align-items: stretch; color: #111; }
.tabs button { padding: 0 10px; }
.tabs .on { background: #edf6f6; border-radius: 2px 2px 0 0; margin: 3px 1px 0; padding: 0 9px 3px; }
.tabs .ext { padding: 0 8px; }
.tabs .mini { padding: 0 0 0 21px; }
.tabs .dd { padding: 0; margin-left: 2px; }

/* ribbon */
.ribbon {
  display: grid;
  grid-template-columns: 45px 366fr 418fr 224fr 208fr 7px;
  height: 94px;
  background: #fdfdfd;
  border-bottom: 1px solid #fff;
}
.panel { display: flex; flex-direction: column; border-right: 1px solid #b2b2b6; padding: 0 1px; min-width: 0; }
.tools { flex: 1; display: grid; padding-top: 3px; color: #2b2f36; }
.ptitle {
  height: 18px;
  display: flex;
  justify-content: center;
  align-items: center;
  border: solid #cfcfd2;
  border-width: 1px 0;
  background: linear-gradient(#e8e8ec, #f2f2f4);
}
.ptitle.left { justify-content: flex-start; gap: 6px; }
.ptitle.with-launch span { flex: 1; text-align: center; }
.launch { width: 12px; }
.t-select { grid-template-columns: 38px; }
.t-graph { grid-template-columns: 44px 99px 105px 38px 38px 38px; }
.t-create { grid-template-columns: 46px 40px 69px 46px 42px 94px 78px; }
.t-sheet { grid-template-columns: 55px 82px 82px; padding-left: 2px; }
.t-win { grid-template-columns: 46px 50px 66px 44px; }
.big {
  height: 72px;
  display: flex;
  flex-direction: column;
  align-items: center;
  padding-top: 4px;
  white-space: nowrap;
}
.big svg { margin-bottom: 4px; }
.split { display: flex; align-items: center; gap: 2px; padding-left: 8px; }
.drop { display: flex; flex-direction: column; align-items: center; gap: 2px; }
.stack { display: flex; flex-direction: column; align-items: flex-start; gap: 2px; }
.stack.wide { padding-left: 2px; }
.stack.ruled { border-right: 1px solid #cfcfcf; height: 72px; margin-right: 6px; }
.t-win .ruled { padding-left: 2px; }
.sm { display: flex; align-items: center; height: 22px; padding: 0 4px; gap: 4px; white-space: nowrap; }
.c { display: flex; justify-content: center; width: 6px; margin-left: 2px; }
.more { background: linear-gradient(90deg, #8f8f8f, #bdbdbd); }
.pointer { position: absolute; right: -5px; top: 54px; }
.options { height: 26px; }

/* properties palette */
.work { flex: 1; display: flex; gap: 5px; min-height: 0; background: #e8ebed; }
.palette { width: 214px; display: flex; flex-direction: column; }
.phead {
  display: flex;
  justify-content: space-between;
  align-items: center;
  height: 19px;
  margin-bottom: 2px;
  padding-right: 4px;
  background: #c1cfdd;
}
.phead span { margin-left: -2px; }
.type {
  height: 73px;
  display: flex;
  align-items: center;
  gap: 4px;
  margin-right: 1px;
  padding-right: 1px;
  text-align: left;
  border: solid #cfcfcf;
  border-width: 2px 1px 1px 0;
  border-top-color: #85898c;
  background: linear-gradient(#fbfcfc, #e6f1f2 60%, #eeeeee);
}
.thumb { width: 65px; height: 66px; display: grid; place-items: center; border: solid #c4c4c4; border-width: 1px 1px 1px 0; }
.filter { display: flex; height: 24px; gap: 6px; padding-top: 1px; background: #eef0f1; }
.combo { display: flex; align-items: center; padding-right: 3px; border: 1px solid #a8a8a8; border-left: 0; }
.combo select { flex: 1; min-width: 0; align-self: stretch; }
.filter .combo { width: 130px; background: #e6e6e6; }
.edit { display: flex; align-items: center; gap: 4px; }
.pbody { flex: 1; display: flex; min-height: 0; overflow: hidden; background: #eef0f0; }
.rows { width: 195px; overflow: hidden; background: #fdfdfd; color: #000; }
table { width: 100%; table-layout: fixed; border-collapse: collapse; }
col.name { width: 96px; }
th, td {
  height: 18px;
  padding: 0 0 0 4px;
  font-weight: normal;
  line-height: 15px;
  text-align: left;
  white-space: nowrap;
  border: 1px dotted #777;
  border-left: 0;
}
td { padding-left: 2px; }
.group th { padding: 0; background: #d6d6d6; border: 0; }
.group div { display: flex; justify-content: space-between; align-items: center; padding: 0 5px 0 0; }
.dim { color: #808080; }
td.field { padding: 0; }
td input[type="checkbox"] { appearance: none; display: block; width: 13px; height: 13px; margin-left: 1px; border: 1px solid #666; background: #fff; }
#scale { display: block; width: 100%; height: 17px; padding-left: 3px; border: 1px solid #000; background: #fff; }
.field button { display: block; width: 100%; height: 17px; line-height: 15px; background: #e6e7e9; border: 1px solid #b4b7bb; border-width: 1px 2px 2px 1px; }
.vscroll { width: 16px; margin-left: 2px; display: flex; flex-direction: column; align-items: center; padding: 7px 0 6px; }
.vscroll i { width: 15px; flex: none; height: 202px; margin-top: 5px; background: #cbcbcd; }
.pfoot { display: flex; justify-content: space-between; align-items: center; height: 25px; padding: 0 3px 4px 0; }
.pfoot a { color: #0563c1; margin-left: -2px; }
.pfoot button { width: 73px; height: 19px; color: #808080; border: 1px solid #cfd2d4; background: #ebeded; }

/* drawing window */
.view {
  flex: 1;
  display: grid;
  grid-template: 1fr 20px / 1fr 14px;
  min-width: 0;
  border: solid #6a6c70;
  border-width: 2px 0 0 2px;
  background: #edf0f1;
}
.canvas { position: relative; background: #fdfdfd; overflow: hidden; }
.drawing { position: absolute; inset: 0; }
.mdi { position: absolute; right: 4px; top: 8px; display: flex; gap: 6px; }
.navbar {
  position: absolute;
  right: 1px;
  top: 28px;
  width: 35px;
  height: 117px;
  display: flex;
  flex-direction: column;
  align-items: center;
  padding: 2px;
  border: 2px solid #b9b6ba;
  border-radius: 5px;
  background: #e5f1f2;
}
.navbar .end { align-self: flex-end; }
.navbar .last { margin-top: auto; }
.navbar hr { width: 100%; margin: 4px 0 7px; border: 0; border-top: 1px solid #b9b6ba; }
.navbar .c { margin: 3px 0 0; opacity: 0.5; }
.navbar .far { margin-top: 9px; }
.wheel { position: relative; margin-top: 7px; }
.wheel b { position: absolute; right: -1px; bottom: 0; font-size: 11px; line-height: 12px; font-weight: normal; color: #6285b5; }
.vs { display: flex; flex-direction: column; align-items: center; padding: 6px 0 5px; }
.vs i { width: 14px; height: 17px; background: #cbcbcd; }
.vcb { display: flex; align-items: center; padding: 0 5px 2px 0; color: #000; }
.vcb button { width: 21px; display: flex; justify-content: center; }
.vcb .scale { width: 56px; margin: 0 0 0 20px; justify-content: flex-start; white-space: nowrap; }
.scr { margin-left: 6px; }
.hs { flex: 1; display: flex; padding-left: 353px; }
.hs i { width: 17px; height: 15px; background: #cbcbcd; }
.grip { display: flex; align-items: center; justify-content: flex-end; }

/* status bar */
.status { height: 17px; overflow: hidden; border-top: 1px solid #85898c; background: linear-gradient(#e6e6e6, #c8c8c8); }
.status-in { display: flex; height: 22px; margin-top: 2px; color: #000; }
.hint { width: 366px; text-indent: -3px; overflow: hidden; white-space: nowrap; line-height: 20px; }
.cell { width: 26px; display: flex; align-items: center; justify-content: center; border: 1px solid #d4d4d4; background: #d0d0d0; }
.wset { width: 205px; background: #fbfdfd; margin-left: 4px; }
.cell.wide { width: 54px; gap: 6px; margin: 0 1px; }
.cell.last { width: 56px; justify-content: flex-start; gap: 2px; margin-right: 53px; background: none; border: 0; }
.option { width: 157px; margin-left: 2px; background: #fbfdfd; color: #777; }
.option select { padding-left: 3px; }
```
